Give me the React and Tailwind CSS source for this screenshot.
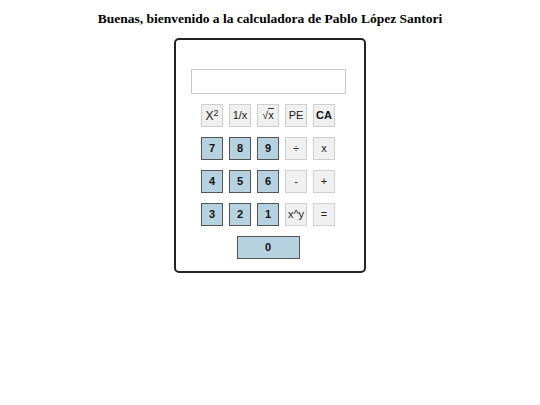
export default function App() {
	const rows = [
		[
			{ label: <span className="text-[12px]">X<sup className="text-[9px] relative -top-[4px] align-baseline">2</sup></span>, kind: "op" },
			{ label: "1/x", kind: "op" },
			{ label: <span>√<span className="border-t border-[#333]">x</span></span>, kind: "op" },
			{ label: "PE", kind: "op" },
			{ label: "CA", kind: "opb" },
		],
		[
			{ label: "7", kind: "num" },
			{ label: "8", kind: "num" },
			{ label: "9", kind: "num" },
			{ label: "÷", kind: "op" },
			{ label: "x", kind: "op" },
		],
		[
			{ label: "4", kind: "num" },
			{ label: "5", kind: "num" },
			{ label: "6", kind: "num" },
			{ label: "-", kind: "op" },
			{ label: "+", kind: "op" },
		],
		[
			{ label: "3", kind: "num" },
			{ label: "2", kind: "num" },
			{ label: "1", kind: "num" },
			{ label: "x^y", kind: "op" },
			{ label: "=", kind: "op" },
		],
	];

	const cls = {
		num: "bg-[#b6d2e0] border border-[#555] font-bold text-[#111]",
		op: "bg-[#f0f0f0] border border-[#cfcfcf] text-[#222]",
		opb: "bg-[#f0f0f0] border border-[#cfcfcf] font-bold text-[#111]",
	};

	return (
		<div className="min-h-screen bg-white flex flex-col items-center font-['Liberation_Sans',Arial,sans-serif]">
			<h1 className="mt-[10px] text-[13.5px] font-bold text-black font-['Liberation_Serif','Times_New_Roman',serif] leading-[18px]">
				Buenas, bienvenido a la calculadora de Pablo López Santori
			</h1>
			<div className="mt-[10px] w-[192px] border-2 border-[#222] rounded-[5px] pt-[29px] pb-[12px] pl-[14px] pr-[18px] flex flex-col items-center">
				<input
					type="text"
					className="w-[155px] h-[25px] border border-[#c8c8c8] outline-none"
				/>
				<div className="mt-[10px] flex flex-col gap-[10px]">
					{rows.map((row, i) => (
						<div key={i} className="flex gap-[6px]">
							{row.map((b, j) => (
								<button
									key={j}
									className={`w-[22px] h-[23px] flex items-center justify-center text-[11px] leading-none ${cls[b.kind]}`}
								>
									{b.label}
								</button>
							))}
						</div>
					))}
				</div>
				<button className="mt-[10px] w-[63px] h-[23px] bg-[#b6d2e0] border border-[#555] font-bold text-[11px] text-[#111]">
					0
				</button>
			</div>
		</div>
	);
}
